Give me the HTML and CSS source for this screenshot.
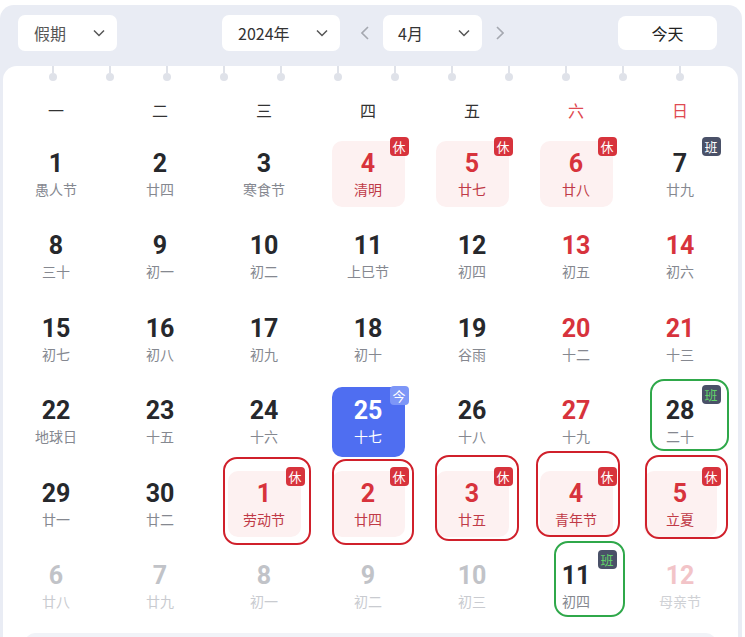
FILE: index.html
```html
<!DOCTYPE html>
<html lang="zh-CN">
<head>
<meta charset="utf-8">
<title>日历</title>
<link rel="stylesheet" href="styles.css">
</head>
<body>
<div class="frame">
  <div class="toolbar">
    <div class="select sel-type"><span>假期</span><svg class="chev" viewBox="0 0 12 8"><path d="M1 1.5 6 6.5 11 1.5"/></svg></div>
    <div class="nav">
      <div class="select sel-year"><span>2024年</span><svg class="chev" viewBox="0 0 12 8"><path d="M1 1.5 6 6.5 11 1.5"/></svg></div>
      <svg class="arrow" viewBox="0 0 8 14"><path d="M7 1 1 7 7 13"/></svg>
      <div class="select sel-month"><span>4月</span><svg class="chev" viewBox="0 0 12 8"><path d="M1 1.5 6 6.5 11 1.5"/></svg></div>
      <svg class="arrow" viewBox="0 0 8 14"><path d="M1 1 7 7 1 13"/></svg>
    </div>
    <div class="today-btn">今天</div>
  </div>
  <div class="panel">
    <div class="rings">
      <i></i><i></i><i></i><i></i><i></i><i></i><i></i><i></i><i></i><i></i><i></i><i></i>
    </div>
    <div class="week">
      <span>一</span><span>二</span><span>三</span><span>四</span><span>五</span><span class="we">六</span><span class="we">日</span>
    </div>
    <div class="grid">
      <div class="cell"><div class="day"><b class="num">1</b><span class="lunar">愚人节</span></div></div>
      <div class="cell"><div class="day"><b class="num">2</b><span class="lunar">廿四</span></div></div>
      <div class="cell"><div class="day"><b class="num">3</b><span class="lunar">寒食节</span></div></div>
      <div class="cell"><div class="day hol"><span class="badge rest">休</span><b class="num">4</b><span class="lunar">清明</span></div></div>
      <div class="cell"><div class="day hol"><span class="badge rest">休</span><b class="num">5</b><span class="lunar">廿七</span></div></div>
      <div class="cell"><div class="day hol"><span class="badge rest">休</span><b class="num">6</b><span class="lunar">廿八</span></div></div>
      <div class="cell"><div class="day"><span class="badge work">班</span><b class="num">7</b><span class="lunar">廿九</span></div></div>

      <div class="cell"><div class="day"><b class="num">8</b><span class="lunar">三十</span></div></div>
      <div class="cell"><div class="day"><b class="num">9</b><span class="lunar">初一</span></div></div>
      <div class="cell"><div class="day"><b class="num">10</b><span class="lunar">初二</span></div></div>
      <div class="cell"><div class="day"><b class="num">11</b><span class="lunar">上巳节</span></div></div>
      <div class="cell"><div class="day"><b class="num">12</b><span class="lunar">初四</span></div></div>
      <div class="cell"><div class="day wkend"><b class="num">13</b><span class="lunar">初五</span></div></div>
      <div class="cell"><div class="day wkend"><b class="num">14</b><span class="lunar">初六</span></div></div>

      <div class="cell"><div class="day"><b class="num">15</b><span class="lunar">初七</span></div></div>
      <div class="cell"><div class="day"><b class="num">16</b><span class="lunar">初八</span></div></div>
      <div class="cell"><div class="day"><b class="num">17</b><span class="lunar">初九</span></div></div>
      <div class="cell"><div class="day"><b class="num">18</b><span class="lunar">初十</span></div></div>
      <div class="cell"><div class="day"><b class="num">19</b><span class="lunar">谷雨</span></div></div>
      <div class="cell"><div class="day wkend"><b class="num">20</b><span class="lunar">十二</span></div></div>
      <div class="cell"><div class="day wkend"><b class="num">21</b><span class="lunar">十三</span></div></div>

      <div class="cell"><div class="day"><b class="num">22</b><span class="lunar">地球日</span></div></div>
      <div class="cell"><div class="day"><b class="num">23</b><span class="lunar">十五</span></div></div>
      <div class="cell"><div class="day"><b class="num">24</b><span class="lunar">十六</span></div></div>
      <div class="cell"><div class="day today"><span class="badge now">今</span><b class="num">25</b><span class="lunar">十七</span></div></div>
      <div class="cell"><div class="day"><b class="num">26</b><span class="lunar">十八</span></div></div>
      <div class="cell"><div class="day wkend"><b class="num">27</b><span class="lunar">十九</span></div></div>
      <div class="cell"><div class="day"><span class="badge work mark">班</span><b class="num">28</b><span class="lunar">二十</span></div><i class="ring green g28"></i></div>

      <div class="cell"><div class="day"><b class="num">29</b><span class="lunar">廿一</span></div></div>
      <div class="cell"><div class="day"><b class="num">30</b><span class="lunar">廿二</span></div></div>
      <div class="cell"><div class="day hol"><span class="badge rest">休</span><b class="num">1</b><span class="lunar">劳动节</span></div><i class="ring red r1"></i></div>
      <div class="cell"><div class="day hol"><span class="badge rest">休</span><b class="num">2</b><span class="lunar">廿四</span></div><i class="ring red r2"></i></div>
      <div class="cell"><div class="day hol"><span class="badge rest">休</span><b class="num">3</b><span class="lunar">廿五</span></div><i class="ring red r3"></i></div>
      <div class="cell"><div class="day hol"><span class="badge rest">休</span><b class="num">4</b><span class="lunar">青年节</span></div><i class="ring red r4"></i></div>
      <div class="cell"><div class="day hol"><span class="badge rest">休</span><b class="num">5</b><span class="lunar">立夏</span></div><i class="ring red r5"></i></div>

      <div class="cell"><div class="day other"><b class="num">6</b><span class="lunar">廿八</span></div></div>
      <div class="cell"><div class="day other"><b class="num">7</b><span class="lunar">廿九</span></div></div>
      <div class="cell"><div class="day other"><b class="num">8</b><span class="lunar">初一</span></div></div>
      <div class="cell"><div class="day other"><b class="num">9</b><span class="lunar">初二</span></div></div>
      <div class="cell"><div class="day other"><b class="num">10</b><span class="lunar">初三</span></div></div>
      <div class="cell"><div class="day"><span class="badge work mark">班</span><b class="num">11</b><span class="lunar">初四</span></div><i class="ring green g11"></i></div>
      <div class="cell"><div class="day other-we"><b class="num">12</b><span class="lunar">母亲节</span></div></div>
    </div>
    <div class="next-strip"></div>
  </div>
</div>
</body>
</html>
```
FILE: styles.css
```css
* { box-sizing: border-box; }
html, body { margin: 0; padding: 0; background: #fff; }
body {
  font-family: "Noto Sans CJK SC", "Noto Sans", sans-serif;
  width: 745px;
  height: 637px;
  overflow: hidden;
  padding-top: 5px;
}
.frame {
  width: 742px;
  height: 632px;
  overflow: hidden;
  background: #e9ecf4;
  border-radius: 14px 14px 0 0;
  display: flex;
  flex-direction: column;
}
.toolbar {
  flex: 0 0 61px;
  display: flex;
  align-items: flex-start;
  padding: 10px 25px 0 18px;
}
.select {
  height: 36px;
  background: #fff;
  border-radius: 7px;
  display: flex;
  align-items: center;
  justify-content: space-between;
  padding: 0 12px 0 16px;
  font-size: 16px;
  color: #333;
}
.sel-type { width: 99px; color: #555; }
.sel-year { width: 118px; }
.sel-month { width: 99px; padding-left: 15px; }
.chev { width: 12px; height: 8px; fill: none; stroke: #555; stroke-width: 1.5; }
.nav {
  display: flex;
  align-items: center;
  margin-left: 105px;
}
.arrow { width: 8px; height: 14px; fill: none; stroke: #a5a8b0; stroke-width: 1.6; margin: 0 14px 0 21px; }
.arrow:last-child { margin: 0 0 0 14px; }
.today-btn {
  margin-left: auto;
  margin-top: 1px;
  width: 99px;
  height: 34px;
  background: #fff;
  border-radius: 8px;
  display: flex;
  align-items: center;
  justify-content: center;
  font-size: 16px;
  color: #222;
}
.panel {
  flex: 1 1 auto;
  min-height: 0;
  margin: 0 4px 0 3px;
  background: #fff;
  border-radius: 14px 14px 0 0;
  position: relative;
}
.rings {
  height: 22px;
  display: flex;
  padding-left: 46px;
  gap: 49px;
}
.rings i {
  width: 8px;
  display: flex;
  flex-direction: column;
  align-items: center;
}
.rings i::before {
  content: "";
  width: 2px;
  height: 7px;
  background: #dfe2e9;
}
.rings i::after {
  content: "";
  width: 8px;
  height: 8px;
  border-radius: 50%;
  background: #dfe2e9;
}
.week {
  display: grid;
  grid-template-columns: repeat(7, 104px);
  height: 44.75px;
  padding-left: 1px;
  align-items: center;
  text-align: center;
  font-size: 16px;
  color: #333;
}
.week .we { color: #df4a52; }
.grid {
  display: grid;
  grid-template-columns: repeat(7, 104px);
  grid-auto-rows: 82.5px;
  padding-left: 1px;
}
.cell {
  position: relative;
  display: flex;
  align-items: center;
  justify-content: center;
}
.day {
  position: relative;
  width: 73px;
  height: 66px;
  border-radius: 10px;
  display: flex;
  flex-direction: column;
  align-items: center;
  justify-content: center;
}
.num {
  font-family: Roboto, "Liberation Sans", sans-serif;
  font-weight: 700;
  font-size: 25px;
  line-height: 28px;
  color: #26282c;
}
.lunar {
  margin-top: 2px;
  font-size: 14px;
  line-height: 19px;
  color: #858890;
}
.hol { background: #fdf1f1; }
.hol .num { color: #d7333c; }
.hol .lunar { color: #c03a47; }
.wkend .num { color: #d7333c; }
.today { background: #4f6ef1; height: 70px; }
.today .num, .today .lunar { color: #fff; }
.other .num { color: #c1c3c8; }
.other .lunar { color: #c9cbd0; }
.other-we .num { color: #f2c4c8; }
.other-we .lunar { color: #cfd1d5; }
.badge {
  position: absolute;
  top: -4px;
  right: -4px;
  width: 19px;
  height: 19px;
  border-radius: 4px;
  font-size: 13px;
  line-height: 19px;
  text-align: center;
  color: #fff;
}
.rest { background: #d7333c; }
.work { background: #4a5168; }
.work.mark { color: #62d46a; }
.now { background: #7d96f7; top: -1px; }
.ring {
  position: absolute;
  border-radius: 14px;
  border: 2.5px solid;
  pointer-events: none;
}
.red { border-color: #d0202b; }
.green { border-color: #2fa84a; }
.r1 { left: 11px; right: 5px; top: -6px; bottom: 0; }
.r2 { left: 16px; right: 6px; top: -4px; bottom: 0; }
.r3 { left: 15px; right: 5px; top: -8px; bottom: 4px; }
.r4 { left: 12px; right: 8px; top: -12px; bottom: 8px; }
.r5 { left: 17px; right: 4px; top: -8px; bottom: 6px; }
.g28 { left: 22px; right: 3px; top: -1px; bottom: 12px; }
.g11 { left: 30px; right: 3px; top: -4px; bottom: 11px; }
.next-strip {
  margin: 5px 22px 0 22px;
  height: 10px;
  background: #f1f3f8;
  border-radius: 10px 10px 0 0;
}
```
